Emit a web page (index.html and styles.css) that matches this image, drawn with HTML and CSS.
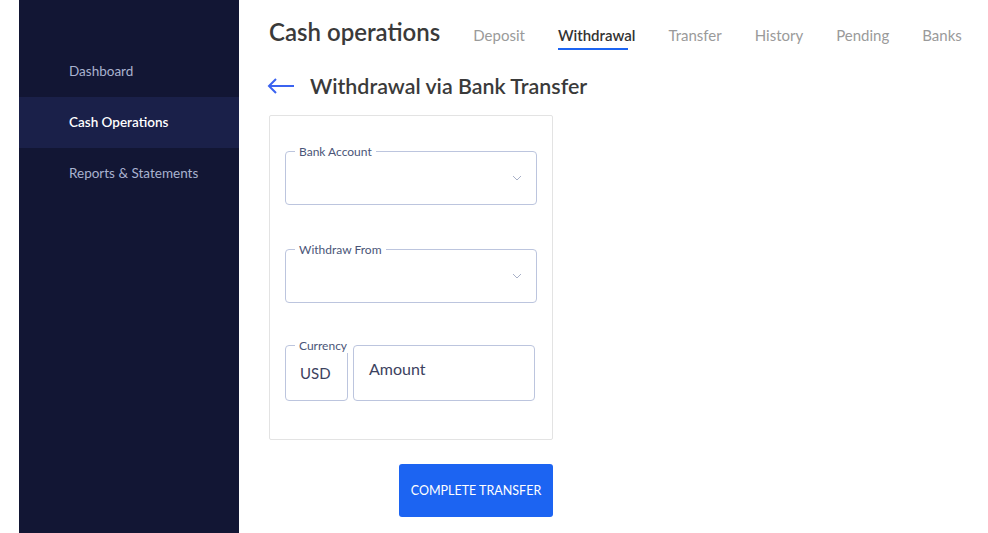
FILE: index.html
```html
<!DOCTYPE html>
<html lang="en">
<head>
  <meta charset="UTF-8">
  <title>Cash operations</title>
  <link rel="stylesheet" href="styles.css">
</head>
<body>
  <div class="layout">
    <aside class="sidebar">
      <a class="nav-item">Dashboard</a>
      <a class="nav-item active">Cash Operations</a>
      <a class="nav-item">Reports &amp; Statements</a>
    </aside>

    <main class="content">
      <header class="topbar">
        <h1>Cash operations</h1>
        <nav class="tabs">
          <a class="tab">Deposit</a>
          <a class="tab active">Withdrawal</a>
          <a class="tab">Transfer</a>
          <a class="tab">History</a>
          <a class="tab">Pending</a>
          <a class="tab">Banks</a>
        </nav>
      </header>

      <div class="page-title">
        <svg class="back" width="28" height="16" viewBox="0 0 28 16">
          <path d="M27 8H2M9 1L2 8l7 7" fill="none" stroke="#3b63f0" stroke-width="2"/>
        </svg>
        <h2>Withdrawal via Bank Transfer</h2>
      </div>

      <div class="card">
        <div class="field select">
          <label>Bank Account</label>
          <svg class="chevron" width="10" height="6" viewBox="0 0 10 6">
            <path d="M1 1l4 4 4-4" fill="none" stroke="#a9b1c8" stroke-width="1"/>
          </svg>
        </div>

        <div class="field select">
          <label>Withdraw From</label>
          <svg class="chevron" width="10" height="6" viewBox="0 0 10 6">
            <path d="M1 1l4 4 4-4" fill="none" stroke="#a9b1c8" stroke-width="1"/>
          </svg>
        </div>

        <div class="amount-row">
          <div class="field currency">
            <label>Currency</label>
            <span>USD</span>
          </div>
          <div class="field amount">Amount</div>
        </div>
      </div>

      <div class="actions">
        <button class="primary">COMPLETE TRANSFER</button>
      </div>
    </main>
  </div>
</body>
</html>
```

FILE: styles.css
```css
body {
  margin: 0;
  font-family: "Lato", "Liberation Sans", sans-serif;
  background: #fff;
  color: #3a3a3a;
}

.layout {
  display: flex;
  height: 533px;
  padding-left: 19px;
}

.sidebar {
  width: 220px;
  flex-shrink: 0;
  background: #121634;
  padding-top: 46px;
  display: flex;
  flex-direction: column;
}

.nav-item {
  height: 51px;
  line-height: 51px;
  padding-left: 50px;
  font-size: 13.5px;
  color: #a9b2cf;
}

.nav-item.active {
  background: #1a2049;
  color: #fff;
  font-weight: 600;
}

.content {
  padding-left: 30px;
}

.topbar {
  display: flex;
  align-items: baseline;
  height: 56px;
  padding-top: 17px;
  box-sizing: border-box;
}

.topbar h1 {
  margin: 0 33px 0 0;
  font-size: 24px;
  font-weight: 600;
  line-height: 30px;
  white-space: nowrap;
  color: #3a3a3a;
}

.tabs {
  display: flex;
  gap: 33px;
  white-space: nowrap;
}

.tab {
  font-size: 15px;
  line-height: 20px;
  color: #9a9a9a;
  position: relative;
}

.tab.active {
  color: #333;
  font-weight: 600;
}

.tab.active::after {
  content: "";
  position: absolute;
  left: 0;
  top: 23px;
  width: 70px;
  height: 2px;
  background: #1c64f2;
}

.page-title {
  display: flex;
  align-items: center;
  gap: 15px;
  height: 30px;
  margin-top: 15px;
  margin-left: -2px;
}

.page-title h2 {
  margin: 0;
  font-size: 21.4px;
  font-weight: 600;
  line-height: 30px;
  white-space: nowrap;
  color: #3a3a3a;
}

.card {
  width: 252px;
  margin-top: 14px;
  border: 1px solid #e3e3e3;
  border-radius: 2px;
  padding: 35px 15px 38px;
  display: flex;
  flex-direction: column;
  gap: 44px;
}

.field {
  border: 1px solid #bcc5de;
  border-radius: 4px;
  position: relative;
  box-sizing: border-box;
}

.field label {
  position: absolute;
  left: 9px;
  top: -8px;
  padding: 0 4px;
  background: #fff;
  font-size: 12px;
  line-height: 15px;
  color: #4a5578;
}

.select {
  height: 54px;
}

.chevron {
  position: absolute;
  right: 14px;
  top: 23px;
}

.amount-row {
  display: flex;
  gap: 5px;
  margin: -2px 2px 0 0;
}

.currency {
  width: 63px;
  height: 56px;
}

.currency span {
  display: block;
  margin: 18px 0 0 14px;
  font-size: 15px;
  color: #3c4260;
}

.amount {
  flex: 1;
  height: 56px;
  padding: 13px 15px 0;
  font-size: 16px;
  color: #3c4260;
}

.actions {
  width: 284px;
  display: flex;
  justify-content: flex-end;
  margin-top: 24px;
}

.primary {
  width: 154px;
  height: 53px;
  border: none;
  border-radius: 3px;
  background: #1c64f2;
  color: #fff;
  font-family: inherit;
  font-size: 12.5px;
  white-space: nowrap;
}
```
